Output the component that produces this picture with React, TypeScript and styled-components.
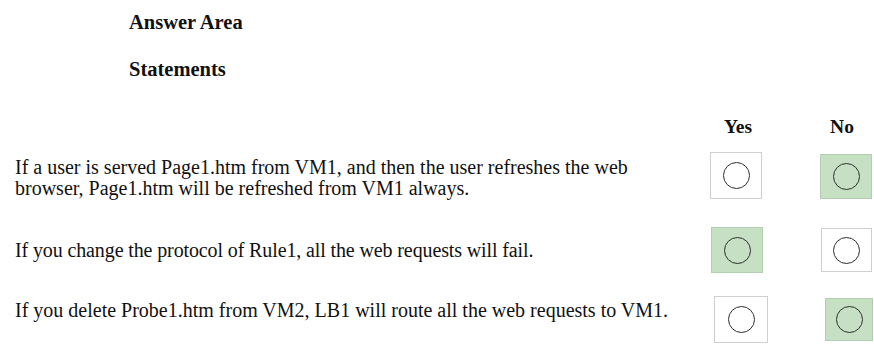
import React from "react";
import styled, { createGlobalStyle } from "styled-components";

const Global = createGlobalStyle`
  html, body { margin: 0; padding: 0; background: #ffffff; }
  body { font-family: "Liberation Serif", "Times New Roman", serif; color: #111111; }
`;

const Page = styled.div`
  width: 874px;
  height: 351px;
  box-sizing: border-box;
  padding: 12px 2px 0 15px;
  overflow: hidden;
  display: flex;
  flex-direction: column;
`;

const Heading = styled.div<{ $space: number }>`
  margin: ${(p) => p.$space}px 0 0 114px;
  font-weight: bold;
  font-size: 20.5px;
  line-height: 20px;
  height: 20px;
`;

const Grid = styled.div<{ $space: number }>`
  display: grid;
  grid-template-columns: minmax(0, 1fr) 52px 52px;
  column-gap: 58px;
  align-items: start;
  margin-top: ${(p) => p.$space}px;
`;

const ColLabel = styled.div<{ $shift: number }>`
  font-weight: bold;
  font-size: 19.5px;
  line-height: 19px;
  text-align: center;
  white-space: nowrap;
  transform: translateX(${(p) => p.$shift}px);
`;

const Statement = styled.div<{ $top: number; $spacing: number }>`
  margin-top: ${(p) => p.$top}px;
  font-size: 20px;
  line-height: 21px;
  white-space: nowrap;
  letter-spacing: ${(p) => p.$spacing}px;
`;

const Box = styled.div<{ $on: boolean; $dx: number; $dy: number; $w: number; $h: number }>`
  box-sizing: border-box;
  width: ${(p) => p.$w}px;
  height: ${(p) => p.$h}px;
  margin-left: ${(p) => p.$dx}px;
  margin-top: ${(p) => p.$dy}px;
  background: ${(p) => (p.$on ? "#c5e0c3" : "#ffffff")};
  border: 1px solid ${(p) => (p.$on ? "#b3cfb1" : "#cfcfcf")};
  display: flex;
  align-items: center;
  justify-content: center;
`;

const Radio = styled.div`
  width: 27px;
  height: 27px;
  box-sizing: border-box;
  border-radius: 50%;
  border: 1.5px solid #2e2e2e;
`;

type BoxGeo = { dx: number; dy: number; w: number; h: number };
type Row = {
  lines: string[];
  answer: "yes" | "no";
  space: number;
  textTop: number;
  spacing: number;
  yes: BoxGeo;
  no: BoxGeo;
};

const rows: Row[] = [
  {
    lines: [
      "If a user is served Page1.htm from VM1, and then the user refreshes the web",
      "browser, Page1.htm will be refreshed from VM1 always.",
    ],
    answer: "no",
    space: 16,
    textTop: 5,
    spacing: 0,
    yes: { dx: 0, dy: 0, w: 52, h: 47 },
    no: { dx: 0, dy: 2, w: 52, h: 45 },
  },
  {
    lines: ["If you change the protocol of Rule1, all the web requests will fail."],
    answer: "yes",
    space: 28,
    textTop: 13,
    spacing: -0.12,
    yes: { dx: 1, dy: 0, w: 52, h: 46 },
    no: { dx: 1, dy: 1, w: 51, h: 44 },
  },
  {
    lines: ["If you delete Probe1.htm from VM2, LB1 will route all the web requests to VM1."],
    answer: "no",
    space: 23,
    textTop: 4,
    spacing: 0,
    yes: { dx: 4, dy: 0, w: 54, h: 47 },
    no: { dx: 5, dy: 2, w: 48, h: 43 },
  },
];

export default function App() {
  return (
    <>
      <Global />
      <Page>
        <Heading $space={0}>Answer Area</Heading>
        <Heading $space={27}>Statements</Heading>
        <Grid $space={38}>
          <div />
          <ColLabel $shift={2}>Yes</ColLabel>
          <ColLabel $shift={-4}>No</ColLabel>
        </Grid>
        {rows.map((r, i) => (
          <Grid key={i} $space={r.space}>
            <Statement $top={r.textTop} $spacing={r.spacing}>
              {r.lines.map((l, j) => (
                <div key={j}>{l}</div>
              ))}
            </Statement>
            <Box $on={r.answer === "yes"} $dx={r.yes.dx} $dy={r.yes.dy} $w={r.yes.w} $h={r.yes.h}>
              <Radio />
            </Box>
            <Box $on={r.answer === "no"} $dx={r.no.dx} $dy={r.no.dy} $w={r.no.w} $h={r.no.h}>
              <Radio />
            </Box>
          </Grid>
        ))}
      </Page>
    </>
  );
}
